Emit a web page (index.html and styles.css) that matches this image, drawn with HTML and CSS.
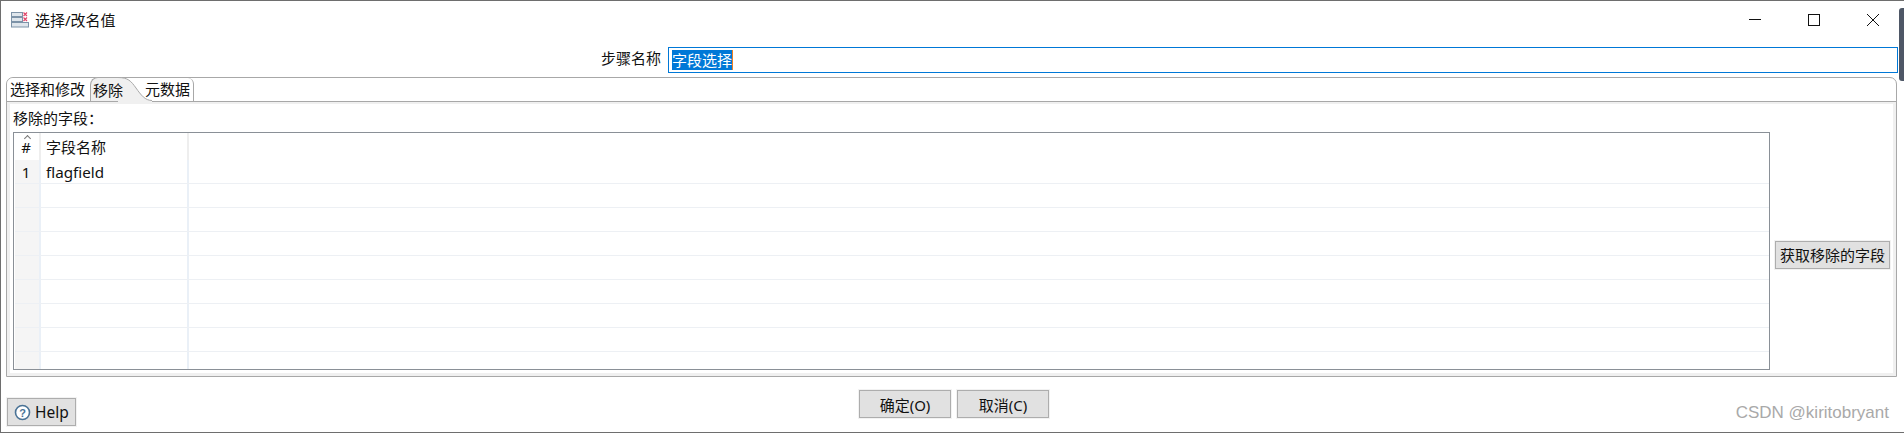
FILE: index.html
```html
<!DOCTYPE html>
<html lang="zh">
<head>
<meta charset="utf-8">
<title>选择/改名值</title>
<link rel="stylesheet" href="styles.css">
</head>
<body>
<div class="window">
  <header class="titlebar">
    <svg class="appicon" width="18" height="16" viewBox="0 0 18 16">
      <rect x="0.5" y="0.5" width="11" height="4" fill="#dfe6ec" stroke="#7d93a8"/>
      <rect x="0.5" y="5.5" width="11" height="4" fill="#dfe6ec" stroke="#7d93a8"/>
      <rect x="0.5" y="10.5" width="17" height="4.500" fill="#dfe6ec" stroke="#7d93a8"/>
      <path d="M12.500 0.500l3.500 3.500M16 0.500l-3.500 3.500M12.500 5.500l3.500 3.500M16 5.500l-3.500 3.500" stroke="#e2476a" stroke-width="1.200" fill="none"/>
    </svg>
    <span class="wintitle">选择/改名值</span>
    <div class="wincontrols">
      <svg width="14" height="14" viewBox="0 0 14 14"><path d="M1 6.500h12" stroke="#111" fill="none"/></svg>
      <svg width="14" height="14" viewBox="0 0 14 14"><rect x="1.500" y="1.500" width="11" height="11" stroke="#111" fill="none"/></svg>
      <svg width="14" height="14" viewBox="0 0 14 14"><path d="M1 1l12 12M13 1L1 13" stroke="#111" fill="none"/></svg>
    </div>
  </header>
  <div class="stepname">
    <label class="steplabel">步骤名称</label>
    <div class="stepinput"><span class="selected">字段选择</span></div>
  </div>
  <section class="tabfolder">
    <div class="tabstrip">
      <span class="tab tab-first">选择和修改</span>
      <span class="tab tab-active"><svg class="tabcurve" width="34" height="25" viewBox="0 0 34 25"><path d="M0 0.500C10 0.500 13 4 18 11C23 18 27 23.500 34 23.500V25H0Z" fill="#f0f0f0"/><path d="M0 0.500C10 0.500 13 4 18 11C23 18 27 23.500 34 23.500" fill="none" stroke="#a8a8a8"/></svg><span class="tablabel">移除</span></span>
      <span class="tab tab-last">元数据</span>
    </div>
    <div class="tabbody">
      <div class="fieldlabel">移除的字段：</div>
      <div class="tablerow">
        <div class="grid">
          <div class="gridrow gridhead">
            <div class="cell num"><span class="sortmark"></span>#</div>
            <div class="cell name">字段名称</div>
            <div class="cell rest"></div>
          </div>
          <div class="gridrow"><div class="cell num">1</div><div class="cell name">flagfield</div><div class="cell rest"></div></div>
          <div class="gridrow"><div class="cell num"></div><div class="cell name"></div><div class="cell rest"></div></div>
          <div class="gridrow"><div class="cell num"></div><div class="cell name"></div><div class="cell rest"></div></div>
          <div class="gridrow"><div class="cell num"></div><div class="cell name"></div><div class="cell rest"></div></div>
          <div class="gridrow"><div class="cell num"></div><div class="cell name"></div><div class="cell rest"></div></div>
          <div class="gridrow"><div class="cell num"></div><div class="cell name"></div><div class="cell rest"></div></div>
          <div class="gridrow"><div class="cell num"></div><div class="cell name"></div><div class="cell rest"></div></div>
          <div class="gridrow"><div class="cell num"></div><div class="cell name"></div><div class="cell rest"></div></div>
          <div class="gridrow gridlast"><div class="cell num"></div><div class="cell name"></div><div class="cell rest"></div></div>
        </div>
        <div class="sideaction"><button class="btn btn-get">获取移除的字段</button></div>
      </div>
    </div>
  </section>
  <footer class="footer">
    <button class="btn btn-help">
      <svg width="17" height="17" viewBox="0 0 17 17"><circle cx="8.500" cy="8.500" r="7" fill="#fff" stroke="#4a7396" stroke-width="1.600"/><text x="8.500" y="12.500" class="helpmark">?</text></svg>
      Help
    </button>
    <div class="footercenter">
      <button class="btn btn-ok">确定(O)</button>
      <button class="btn btn-ok">取消(C)</button>
    </div>
    <span class="watermark">CSDN @kiritobryant</span>
  </footer>
  <div class="edgeshadow"></div>
</div>
</body>
</html>
```
FILE: styles.css
```css
* { box-sizing: border-box; }
html, body { margin: 0; padding: 0; height: 100%; background: #fff; overflow: hidden; }
body { font-family: "Noto Sans", "Noto Sans CJK SC", sans-serif; font-size: 15px; color: #111; }
.window { position: relative; width: 1904px; height: 433px; border-top: 1px solid #6e6e6e; border-left: 1px solid #6e6e6e; border-bottom: 1px solid #6e6e6e; display: flex; flex-direction: column; }
.titlebar { height: 39px; display: flex; align-items: center; padding-left: 10px; padding-bottom: 2px; }
.appicon { margin-right: 6px; }
.wintitle { font-size: 15px; line-height: 20px; }
.wincontrols { margin-left: auto; margin-right: 24px; display: flex; gap: 45px; }
.wincontrols svg { display: block; }
.stepname { height: 37px; display: flex; align-items: flex-start; padding-top: 7px; }
.steplabel { width: 660px; text-align: right; line-height: 23px; }
.stepinput { margin-left: 7px; width: 1230px; height: 26px; border: 1px solid #0078d7; padding: 2px 3px; line-height: 20px; }
.selected { display: inline-block; height: 20px; background: #0078d7; color: #fff; border-right: 1px solid #f08020; }
.tabfolder { margin-left: 5px; width: 1891px; height: 300px; border: 1px solid #a8a8a8; border-top-left-radius: 7px; border-top-right-radius: 7px; display: flex; flex-direction: column; }
.tabstrip { height: 24px; display: flex; border-bottom: 1px solid #a8a8a8; line-height: 23px; }
.tab { position: relative; height: 23px; background: #fff; white-space: nowrap; }
.tab-first { width: 83px; padding-left: 3px; border-top-left-radius: 7px; }
.tab-active { width: 28px; height: 24px; margin-top: -1px; background: #f0f0f0; border-left: 1px solid #a8a8a8; border-top: 1px solid #a8a8a8; border-top-left-radius: 8px; padding-left: 2px; line-height: 24px; z-index: 1; }
.tablabel { position: relative; }
.tabcurve { position: absolute; left: 27px; top: -1px; }
.tab-last { width: 76px; padding-left: 27px; border-right: 1px solid #a8a8a8; border-top-right-radius: 6px; }
.tabbody { flex: 1; border: 3px solid #f0f0f0; border-top-width: 2px; padding-left: 3px; display: flex; flex-direction: column; min-height: 0; }
.fieldlabel { flex: none; height: 28px; line-height: 28px; }
.tablerow { display: flex; flex: 1; min-height: 0; }
.grid { flex: none; width: 1757px; height: 238px; border: 1px solid #8a9097; display: flex; flex-direction: column; padding-left: 1px; overflow: hidden; }
.gridrow { display: flex; flex: none; height: 24px; border-bottom: 1px solid #edf0f4; }
.gridhead { height: 27px; border-bottom: 0; }
.gridlast { border-bottom: 0; }
.cell { height: 100%; line-height: 25px; }
.num { position: relative; width: 26px; padding-right: 2px; background: #f5f5f5; border-right: 2px solid #eaf0f7; text-align: center; }
.name { width: 148px; padding-left: 5px; border-right: 2px solid #eaf0f7; font-size: 15.200px; }
.rest { flex: 1; }
.gridhead .cell { line-height: 28px; }
.gridhead .num { background: #fff; border-right-color: #eee; }
.gridhead .name { border-right-color: #eee; font-size: 15px; }
.sortmark { position: absolute; left: 10px; top: 3px; width: 5px; height: 5px; border-left: 1px solid #777; border-top: 1px solid #777; transform: rotate(45deg); }
.sideaction { display: flex; align-items: center; padding-left: 5px; height: 237px; padding-top: 8px; }
.btn { font-family: inherit; font-size: 15px; color: #111; background: #e1e1e1; border: 1px solid #adadad; outline: 1px solid #f2f2f2; height: 28px; padding: 0; display: inline-flex; align-items: center; justify-content: center; }
.btn-get { width: 115px; }
.footer { position: relative; flex: 1; display: flex; align-items: flex-end; padding: 0 0 6px 6px; }
.btn-help { width: 69px; gap: 4px; font-size: 15.500px; }
.helpmark { font-family: "Liberation Sans", sans-serif; font-size: 11px; font-weight: bold; fill: #4a7396; text-anchor: middle; }
.footercenter { position: absolute; left: 858px; top: 13px; display: flex; gap: 6px; }
.btn-ok { width: 92px; }
.watermark { position: absolute; right: 15px; top: 26px; font-family: "Liberation Sans", sans-serif; font-size: 17px; line-height: 20px; color: #a9a9a9; }
.edgeshadow { position: absolute; right: 0; top: 7px; width: 5px; height: 73px; background: #4e5766; border-radius: 3px 0 0 3px; }
```
